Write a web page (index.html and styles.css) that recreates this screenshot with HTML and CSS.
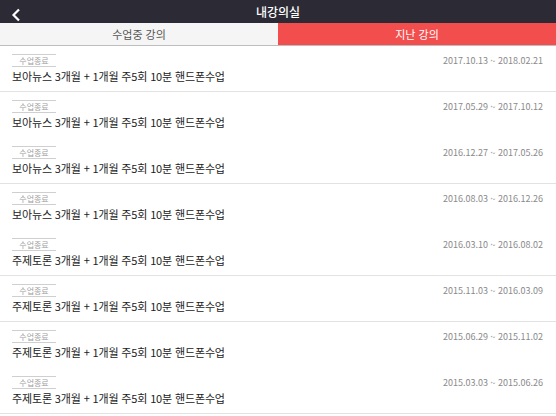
FILE: index.html
```html
<!DOCTYPE html>
<html lang="ko">
<head>
  <meta charset="UTF-8">
  <meta name="viewport" content="width=device-width, initial-scale=1.0">
  <title>내강의실</title>
  <link rel="stylesheet" href="styles.css">
</head>
<body>
  <div class="header">
    <span class="back">
      <svg width="10" height="14" viewBox="0 0 10 14"><path d="M8 1.5 L2.5 7 L8 12.5" fill="none" stroke="#fff" stroke-width="2.2"/></svg>
    </span>
    <h1>내강의실</h1>
  </div>
  <div class="tabs">
    <div class="tab">수업중 강의</div>
    <div class="tab active">지난 강의</div>
  </div>

  <ul class="list">
    <li class="item sep">
      <div class="top"><span class="badge">수업종료</span><span class="date">2017.10.13 ~ 2018.02.21</span></div>
      <div class="name">보아뉴스 3개월 + 1개월 주5회 10분 핸드폰수업</div>
    </li>
    <li class="item">
      <div class="top"><span class="badge">수업종료</span><span class="date">2017.05.29 ~ 2017.10.12</span></div>
      <div class="name">보아뉴스 3개월 + 1개월 주5회 10분 핸드폰수업</div>
    </li>
    <li class="item sep">
      <div class="top"><span class="badge">수업종료</span><span class="date">2016.12.27 ~ 2017.05.26</span></div>
      <div class="name">보아뉴스 3개월 + 1개월 주5회 10분 핸드폰수업</div>
    </li>
    <li class="item">
      <div class="top"><span class="badge">수업종료</span><span class="date">2016.08.03 ~ 2016.12.26</span></div>
      <div class="name">보아뉴스 3개월 + 1개월 주5회 10분 핸드폰수업</div>
    </li>
    <li class="item sep">
      <div class="top"><span class="badge">수업종료</span><span class="date">2016.03.10 ~ 2016.08.02</span></div>
      <div class="name">주제토론 3개월 + 1개월 주5회 10분 핸드폰수업</div>
    </li>
    <li class="item sep">
      <div class="top"><span class="badge">수업종료</span><span class="date">2015.11.03 ~ 2016.03.09</span></div>
      <div class="name">주제토론 3개월 + 1개월 주5회 10분 핸드폰수업</div>
    </li>
    <li class="item">
      <div class="top"><span class="badge">수업종료</span><span class="date">2015.06.29 ~ 2015.11.02</span></div>
      <div class="name">주제토론 3개월 + 1개월 주5회 10분 핸드폰수업</div>
    </li>
    <li class="item sep">
      <div class="top"><span class="badge">수업종료</span><span class="date">2015.03.03 ~ 2015.06.26</span></div>
      <div class="name">주제토론 3개월 + 1개월 주5회 10분 핸드폰수업</div>
    </li>
  </ul>
</body>
</html>
```

FILE: styles.css
```css
body {
  margin: 0;
  background-color: #fff;
  font-family: "Noto Sans CJK KR", "Noto Sans", sans-serif;
  overflow: hidden;
}

.header {
  position: relative;
  height: 23px;
  background-color: #2c2b35;
  display: flex;
  align-items: center;
  justify-content: center;
}

.header h1 {
  margin: 0;
  color: #fff;
  font-size: 12px;
  font-weight: 500;
  line-height: 22px;
}

.back {
  position: absolute;
  left: 11px;
  top: 3px;
  height: 14px;
}

.tabs {
  display: flex;
  height: 22px;
  border-bottom: 1px solid #bdbdbd;
}

.tab {
  flex: 1;
  display: flex;
  align-items: center;
  justify-content: center;
  background-color: #f5f5f5;
  color: #555;
  font-size: 11px;
}

.tab.active {
  background-color: #f24e4e;
  color: #fff;
}

.list {
  list-style: none;
  margin: 0;
  padding: 0;
}

.item {
  height: 46px;
  box-sizing: border-box;
  padding: 8px 13px 0 12px;
}

.item.sep {
  border-bottom: 1px solid #e2e2e2;
}

.top {
  display: flex;
  justify-content: space-between;
  align-items: center;
  height: 13px;
}

.badge {
  display: inline-block;
  width: 44px;
  height: 11px;
  line-height: 11px;
  text-align: center;
  border-top: 1px solid #cfcfcf;
  border-bottom: 1px solid #cfcfcf;
  color: #a0a0a0;
  font-size: 8px;
}

.date {
  color: #8a8a8a;
  font-size: 9px;
}

.name {
  margin-top: 2px;
  color: #222;
  font-size: 11px;
  letter-spacing: -0.15px;
  line-height: 14px;
}
```
